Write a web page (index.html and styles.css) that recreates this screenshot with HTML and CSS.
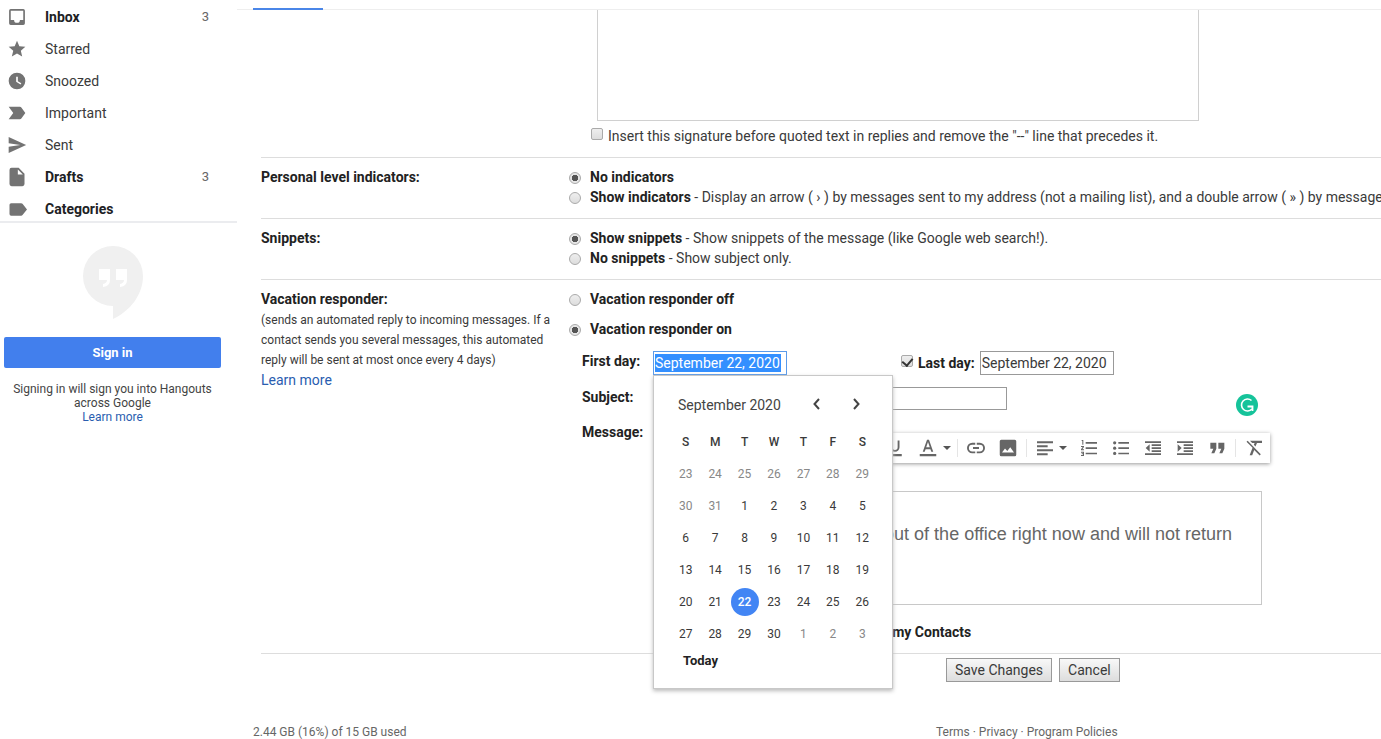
FILE: index.html
```html
<!DOCTYPE html>
<html lang="en">
<head>
<meta charset="utf-8">
<title>Mail settings</title>
<link rel="stylesheet" href="styles.css">
</head>
<body>
<div class="app">
  <aside class="sidebar">
    <nav class="folders" aria-label="Folders">
      <a class="folder unread" href="#inbox"><svg class="folder-icon" viewBox="0 0 24 24"><path d="M19.500 2.500h-15a2 2 0 0 0-2 2v15a2 2 0 0 0 2 2h15a2 2 0 0 0 2-2v-15a2 2 0 0 0-2-2zm0 13h-4a3.500 3.500 0 0 1-7 0h-4v-11h15z"/></svg><span>Inbox</span><span class="count">3</span></a>
      <a class="folder" href="#starred"><svg class="folder-icon" viewBox="0 0 24 24"><path d="M12 17.300 18.200 21l-1.600-7L22 9.200l-7.200-.6L12 2 9.200 8.600 2 9.200 7.500 14l-1.700 7z"/></svg><span>Starred</span></a>
      <a class="folder" href="#snoozed"><svg class="folder-icon" viewBox="0 0 24 24"><path fill-rule="evenodd" d="M12 2a10 10 0 1 0 0 20 10 10 0 0 0 0-20zm4.200 14.200L11 13V7h2v5.200l4.200 2.500z"/></svg><span>Snoozed</span></a>
      <a class="folder" href="#important"><svg class="folder-icon" viewBox="0 0 24 24"><path d="M2 4.500h13.500c.8 0 1.300.3 1.700.9L22 12l-4.800 6.600c-.4.6-.9.9-1.700.9H2L7.500 12z"/></svg><span>Important</span></a>
      <a class="folder" href="#sent"><svg class="folder-icon" viewBox="0 0 24 24"><path d="M2 21.500 23 12 2 2.500V10l14 2-14 2z"/></svg><span>Sent</span></a>
      <a class="folder unread" href="#drafts"><svg class="folder-icon" viewBox="0 0 24 24"><path fill-rule="evenodd" d="M5.500 1H14l7 7v12.500a2.500 2.500 0 0 1-2.500 2.500h-13A2.500 2.500 0 0 1 3 20.500v-17A2.500 2.500 0 0 1 5.500 1zM13 3v6h6z"/></svg><span>Drafts</span><span class="count">3</span></a>
      <a class="folder unread" href="#categories"><svg class="folder-icon" viewBox="0 0 24 24"><path d="M5 5h12c.7 0 1.300.3 1.600.8L24 12.500l-5.400 6.700c-.3.5-.9.8-1.600.8H5a2 2 0 0 1-2-2V7a2 2 0 0 1 2-2z"/></svg><span>Categories</span></a>
    </nav>
    <section class="hangouts">
      <svg class="hangouts-logo" viewBox="0 0 60 73"><path fill="#f0f0f0" d="M30 0a30 30 0 1 0 0 60v13C47 65 60 49 60 30A30 30 0 0 0 30 0z"/><path fill="#fff" d="M16 23h11v11q0 6-7 7v-3q4-1 4-4h-8zm17 0h11v11q0 6-7 7v-3q4-1 4-4h-8z"/></svg>
      <button class="sign-in" type="button">Sign in</button>
      <p class="hangouts-note">Signing in will sign you into Hangouts across Google<br><a href="#hangouts">Learn more</a></p>
    </section>
  </aside>

  <main class="main">
    <div class="tabs"><span class="tab-current"></span></div>
    <form class="settings">
      <section class="setting signature">
        <div></div>
        <div class="signature-body">
          <textarea class="signature-box" aria-label="Signature"></textarea>
          <label class="signature-option"><input class="box" type="checkbox"><span>Insert this signature before quoted text in replies and remove the "--" line that precedes it.</span></label>
        </div>
      </section>

      <section class="setting">
        <h2 class="setting-name">Personal level indicators:</h2>
        <div>
          <label class="option"><input class="radio" type="radio" name="ind" checked><span><b>No indicators</b></span></label>
          <label class="option"><input class="radio" type="radio" name="ind"><span><b>Show indicators</b> - Display an arrow ( › ) by messages sent to my address (not a mailing list), and a double arrow ( » ) by messages sent only to me.</span></label>
        </div>
      </section>

      <section class="setting">
        <h2 class="setting-name">Snippets:</h2>
        <div>
          <label class="option"><input class="radio" type="radio" name="snip" checked><span><b>Show snippets</b> - Show snippets of the message (like Google web search!).</span></label>
          <label class="option"><input class="radio" type="radio" name="snip"><span><b>No snippets</b> - Show subject only.</span></label>
        </div>
      </section>

      <section class="setting">
        <div>
          <h2 class="setting-name">Vacation responder:</h2>
          <p class="setting-note">(sends an automated reply to incoming messages. If a contact sends you several messages, this automated reply will be sent at most once every 4 days)</p>
          <a href="#vacation">Learn more</a>
        </div>
        <div>
          <div class="switches">
            <label class="option"><input class="radio" type="radio" name="vac"><span><b>Vacation responder off</b></span></label>
            <label class="option"><input class="radio" type="radio" name="vac" checked><span><b>Vacation responder on</b></span></label>
          </div>
          <div class="responder">
            <label class="field-name" for="first">First day:</label>
            <div class="dates">
              <input class="text date focused" id="first" type="text" value="September 22, 2020">
              <div class="last-day">
                <input class="box" id="has-last" type="checkbox" aria-label="Use a last day" checked>
                <label for="last">Last day:</label>
                <input class="text date" id="last" type="text" value="September 22, 2020">
              </div>
              <div class="calendar">
                <div class="calendar-head">
                  <span class="calendar-title">September 2020</span>
                  <button class="step" type="button" aria-label="Previous month"><svg viewBox="0 0 12 12"><path d="M8 1 3.500 6 8 11"/></svg></button>
                  <button class="step" type="button" aria-label="Next month"><svg viewBox="0 0 12 12"><path d="M4 1l4.500 5L4 11"/></svg></button>
                </div>
                <table class="days">
                  <thead><tr><th>S</th><th>M</th><th>T</th><th>W</th><th>T</th><th>F</th><th>S</th></tr></thead>
                  <tbody>
                    <tr class="other"><td>23</td><td>24</td><td>25</td><td>26</td><td>27</td><td>28</td><td>29</td></tr>
                    <tr><td class="other">30</td><td class="other">31</td><td>1</td><td>2</td><td>3</td><td>4</td><td>5</td></tr>
                    <tr><td>6</td><td>7</td><td>8</td><td>9</td><td>10</td><td>11</td><td>12</td></tr>
                    <tr><td>13</td><td>14</td><td>15</td><td>16</td><td>17</td><td>18</td><td>19</td></tr>
                    <tr><td>20</td><td>21</td><td><span class="selected">22</span></td><td>23</td><td>24</td><td>25</td><td>26</td></tr>
                    <tr><td>27</td><td>28</td><td>29</td><td>30</td><td class="other">1</td><td class="other">2</td><td class="other">3</td></tr>
                  </tbody>
                </table>
                <button class="today" type="button">Today</button>
              </div>
            </div>

            <label class="field-name" for="subject">Subject:</label>
            <div class="subject-field">
              <input class="text subject" id="subject" type="text">
              <svg class="assistant" viewBox="0 0 22 22"><circle cx="11" cy="11" r="11" fill="#15c39a"/><path fill="none" stroke="#fff" stroke-width="1.600" d="M15.500 6.500a6 6 0 1 0 .5 8.500"/><path fill="none" stroke="#fff" stroke-width="1.800" d="M11.500 12.500h5V17"/></svg>
            </div>

            <label class="field-name" for="message">Message:</label>
            <div class="message-field">
              <div class="toolbar">
                <button class="tool large" type="button" aria-label="Underline"><svg viewBox="0 0 24 24"><path d="M12 17a6 6 0 0 0 6-6V2h-2.500v9a3.500 3.500 0 0 1-7 0V2H6v9a6 6 0 0 0 6 6zm-9 3V23h18v-3z"/></svg></button>
                <button class="tool large wide" type="button" aria-label="Text color"><svg viewBox="0 0 24 24"><path fill-rule="evenodd" d="M10.700 1 5 17h2.600l1.200-3.500h6.400l1.200 3.500H19L13.300 1zm-1.100 10L12 4l2.400 7zM1 20h22v3H1z"/></svg><i class="caret"></i></button>
                <i class="divider"></i>
                <button class="tool large" type="button" aria-label="Insert link"><svg viewBox="0 0 24 24"><path d="M2.500 12A4.500 4.500 0 0 1 7 7.500h4V5H7a7 7 0 0 0 0 14h4v-2.500H7A4.500 4.500 0 0 1 2.500 12zM8 13.200h8v-2.400H8zM17 5h-4v2.500h4a4.500 4.500 0 0 1 0 9h-4V19h4a7 7 0 0 0 0-14z"/></svg></button>
                <button class="tool large" type="button" aria-label="Insert image"><svg viewBox="0 0 24 24"><path fill-rule="evenodd" d="M3 1h18a2 2 0 0 1 2 2v18a2 2 0 0 1-2 2H3a2 2 0 0 1-2-2V3a2 2 0 0 1 2-2zm1 17h16l-5-7-4 5-3-3.500z"/></svg></button>
                <i class="divider"></i>
                <button class="tool wide" type="button" aria-label="Align"><svg viewBox="0 0 24 24"><path d="M0 2h24v3H0zm0 6h16v3H0zm0 6h24v3H0zm0 6h16v3H0z"/></svg><i class="caret"></i></button>
                <button class="tool" type="button" aria-label="Numbered list"><svg viewBox="0 0 24 24"><path d="M7 3h17v2.500H7zm0 8h17v2.500H7zm0 8h17v2.500H7zM1 0h2.500v7H2V1.500H1zM0 9h4.500v1.500L2 14h2.500v1.500H0V14l2.500-3.500H0zm0 8.500h4.500V24H0v-1.500h3v-1H1V20h2v-1H0z"/></svg></button>
                <button class="tool" type="button" aria-label="Bulleted list"><svg viewBox="0 0 24 24"><path d="M8 3h16v2.500H8zm0 8h16v2.500H8zm0 8h16v2.500H8z"/><circle cx="2.500" cy="4.200" r="2.400"/><circle cx="2.500" cy="12.200" r="2.400"/><circle cx="2.500" cy="20.200" r="2.400"/></svg></button>
                <button class="tool" type="button" aria-label="Indent less"><svg viewBox="0 0 24 24"><path d="M0 2h24v2.500H0zm10 4.500h14V9H10zm0 4.500h14v2.500H10zm0 4.500h14V18H10zM0 20h24v2.500H0zM7 6.500v11L1 12z"/></svg></button>
                <button class="tool" type="button" aria-label="Indent more"><svg viewBox="0 0 24 24"><path d="M0 2h24v2.500H0zm10 4.500h14V9H10zm0 4.500h14v2.500H10zm0 4.500h14V18H10zM0 20h24v2.500H0zM1 6.500v11L7 12z"/></svg></button>
                <button class="tool" type="button" aria-label="Quote"><svg viewBox="0 0 24 24"><path d="M2 4h9v9l-3 7H3.500l3-7H2zm12 0h9v9l-3 7h-4.500l3-7H14z"/></svg></button>
                <i class="divider"></i>
                <button class="tool" type="button" aria-label="Remove formatting"><svg viewBox="0 0 24 24"><path d="M6 1h18v3.500h-7.500l-2.300 5.300-2.500-2.500L13 4.500H9.200zM2.500 1 .8 2.700l9 9L5.500 23h3.800l3-8 8.200 8.200 1.700-1.700z"/></svg></button>
              </div>
              <textarea class="message" id="message">Thank you for writing. I am out of the office right now and will not return</textarea>
              <label class="contacts"><input class="box" type="checkbox"><b>Only send a response to people in my Contacts</b></label>
            </div>
          </div>
        </div>
      </section>

      <div class="actions">
        <button class="action" type="button">Save Changes</button>
        <button class="action" type="button">Cancel</button>
      </div>
    </form>
    <footer class="footer">
      <span>2.44 GB (16%) of 15 GB used</span>
      <span><a href="#terms">Terms</a> · <a href="#privacy">Privacy</a> · <a href="#policies">Program Policies</a></span>
    </footer>
  </main>
</div>
</body>
</html>
```
FILE: styles.css
```css
* { box-sizing: border-box; }
body { margin: 0; overflow: hidden; background: #fff; color: #3a3a3a; font: 14px/20px Roboto, Arial, sans-serif; }
button, input, textarea { font: inherit; color: inherit; margin: 0; }
button { padding: 0; border: 0; background: none; }
h2, p { margin: 0; font-size: inherit; }
a { color: #2a5db0; text-decoration: none; }
b, h2 { color: #222; font-weight: 700; }

.app { display: flex; align-items: flex-start; }

/* Sidebar */
.sidebar { flex: none; width: 237px; }
.folders { padding-top: 1px; }
.folder { display: flex; align-items: center; height: 32px; padding: 0 28px 0 7px; color: #3a3a3a; }
.folder-icon { width: 20px; height: 20px; margin-right: 18px; fill: #737373; }
.unread { color: #202124; font-weight: 700; }
.count { margin-left: auto; color: #666; font-size: 13px; font-weight: 400; }
.hangouts { display: flex; flex-direction: column; margin-top: -4px; padding: 23px 16px 0 4px; border-top: 2px solid #ebecef; }
.hangouts-logo { align-self: center; width: 60px; height: 73px; }
.sign-in { height: 31px; margin-top: 18px; border-radius: 2px; background: #427fed; color: #fff; font-size: 13px; font-weight: 700; }
.hangouts-note { margin-top: 14px; color: #444; font-size: 12px; line-height: 14px; text-align: center; }

/* Settings */
.main { flex: 1; min-width: 0; overflow: hidden; }
.tabs { height: 10px; padding-left: 16px; border-bottom: 1px solid #eee; }
.tab-current { display: block; width: 70px; height: 10px; border-bottom: 2px solid #4a86e8; }
.settings { padding-left: 24px; }
.setting { display: grid; grid-template-columns: 308px minmax(0, 1fr); padding: 9px 0 11px; border-bottom: 1px solid #ddd; }
.signature { padding: 0 0 11px; }
.signature-body { padding-left: 22px; }
.signature-box { display: block; width: 602px; height: 111px; margin-left: 6px; border: 1px solid #d0d0d0; border-top: 0; resize: none; }
.signature-option { display: flex; gap: 5px; margin-top: 5px; }
.option { display: flex; gap: 9px; white-space: nowrap; }
.switches { display: grid; gap: 10px; }
.setting-note { margin-top: 1px; font-size: 12px; }

.radio, .box { flex: none; appearance: none; width: 12px; height: 12px; border: 1px solid #aaa; background: linear-gradient(#eee, #ddd); }
.radio { margin-top: 5px; border-radius: 50%; }
.radio:checked { background: radial-gradient(circle, #555 0 3px, #e6e6e6 3px); }
.box { display: grid; place-items: start center; margin-top: 2px; border-radius: 2px; }
.box:checked::after { content: ""; width: 5px; height: 8px; border: solid #333; border-width: 0 2px 2px 0; transform: rotate(40deg); }

.responder { display: grid; grid-template-columns: 71px minmax(0, 617px); row-gap: 12px; margin-top: 12px; padding-left: 13px; }
.field-name, .last-day label { color: #222; font-weight: 700; }
.text { height: 24px; padding: 0 1px; border: 1px solid #999; background: #fff; outline: 0; }
.date { width: 134px; }
.focused { border-color: #5b9bea; background: linear-gradient(#338fff, #338fff) 1px 2px / 126px 18px no-repeat #fff; color: #fff; }
.dates { position: relative; display: flex; }
.last-day { display: flex; align-items: center; gap: 5px; margin-left: 114px; }
.last-day .box { align-self: flex-start; margin-top: 4px; }
.subject-field { position: relative; }
.subject { display: block; width: 354px; height: 23px; }
.assistant { position: absolute; top: 7px; right: 12px; width: 22px; height: 22px; }

.toolbar { display: flex; justify-content: flex-end; height: 30px; margin: 11px 0 0 8px; box-shadow: 0 1px 4px #999; }
.tool { display: flex; align-items: center; justify-content: center; width: 32px; fill: #666; }
.tool svg { width: 16px; height: 16px; }
.large svg { width: 18px; height: 18px; }
.wide { justify-content: flex-start; width: 44px; gap: 6px; padding-left: 8px; }
.caret { border: 4px solid transparent; border-top-color: #555; border-bottom: 0; }
.divider { width: 1px; height: 18px; margin: 6px 2px; background: #e5e5e5; }
.message { display: block; width: 609px; height: 114px; margin-top: 28px; padding: 31px 0 0 13px; border: 1px solid #c8c8c8; color: #666; font: 18px/22px "Liberation Sans", Arial, sans-serif; resize: none; }
.contacts { display: flex; gap: 12px; margin-top: 17px; }
.contacts .box { margin-top: 4px; }

/* Date picker */
.calendar { position: absolute; z-index: 1; top: 24px; left: 0; width: 240px; height: 314px; padding: 17px; border: 1px solid #c8c8c8; background: #fff; box-shadow: 0 2px 4px #bbb; }
.calendar-head { display: flex; align-items: center; height: 24px; padding-left: 7px; }
.calendar-title { width: 120px; margin-right: 2px; color: #444; }
.step { width: 40px; height: 24px; }
.step svg { width: 12px; height: 12px; fill: none; stroke: #444; stroke-width: 2; }
.days { width: 206px; margin-top: 9px; border-collapse: collapse; table-layout: fixed; font-size: 12px; text-align: center; }
.days th, .days td { height: 32px; padding: 0; }
.days th { font-weight: 500; }
.other { color: #888; }
.selected { display: block; width: 28px; margin: 0 auto; border-radius: 50%; background: #4285f4; color: #fff; font-weight: 500; line-height: 28px; }
.today { margin: 1px 0 0 12px; color: #222; font-size: 13px; font-weight: 700; }

.actions { display: flex; gap: 7px; padding: 4px 0 0 685px; }
.action { height: 24px; padding: 0 8px; border: 1px solid #999; background: linear-gradient(#f8f8f8, #ddd); }
.footer { display: grid; grid-template-columns: 683px auto; margin-top: 40px; padding-left: 16px; color: #666; font-size: 12px; }
.footer a { color: inherit; }
```
